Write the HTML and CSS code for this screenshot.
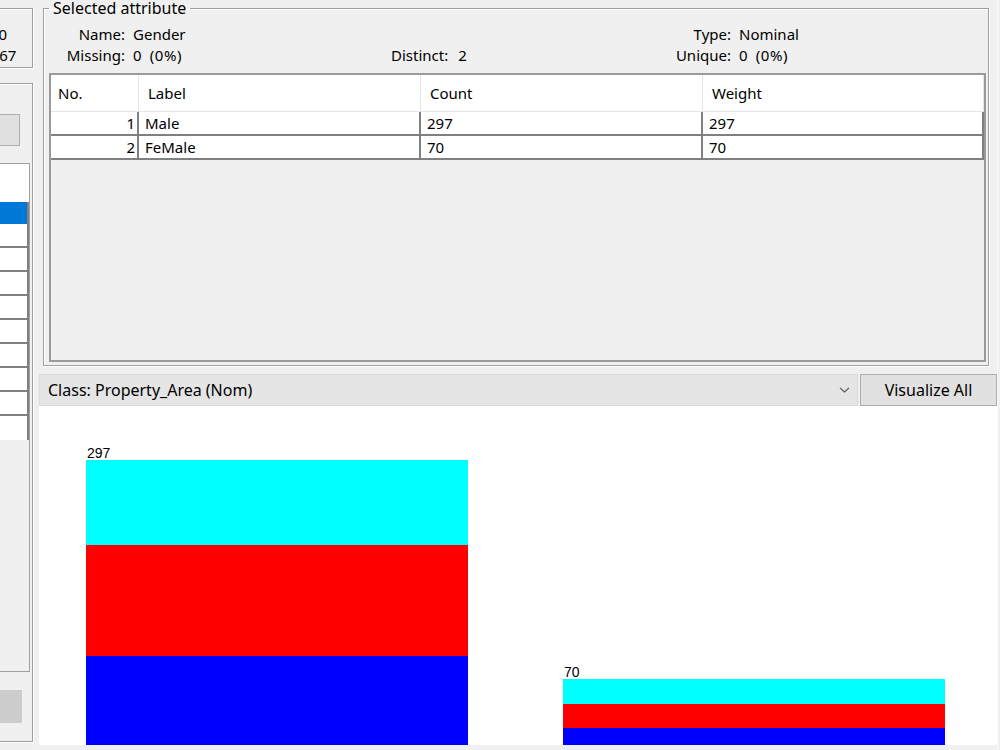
FILE: index.html
```html
<!DOCTYPE html>
<html>
<head>
<meta charset="utf-8">
<link rel="stylesheet" href="styles.css">
</head>
<body>
<div class="app">
  <div class="left">
    <div class="box etched rel">
      <div class="rel-line a">Attributes: 10</div>
      <div class="rel-line b">Sum of weights: 367</div>
    </div>
    <div class="box etched attrs">
      <button class="btn top-btn">All</button>
      <div class="attr-list">
        <div class="attr-head"></div>
        <div class="attr-row sel"></div>
        <div class="attr-row"></div>
        <div class="attr-row"></div>
        <div class="attr-row"></div>
        <div class="attr-row"></div>
        <div class="attr-row"></div>
        <div class="attr-row"></div>
        <div class="attr-row"></div>
        <div class="attr-row"></div>
        <div class="attr-row last"></div>
      </div>
      <button class="btn dis-btn">Remove</button>
    </div>
  </div>

  <div class="right">
    <fieldset class="sel-attr etched">
      <legend>Selected attribute</legend>
      <div class="info">
        <div class="lbl">Name:</div><div class="val">Gender</div><div class="mid"></div><div class="lbl">Type:</div><div class="val2">Nominal</div>
        <div class="lbl">Missing:</div><div class="val pct">0 (0%)</div><div class="mid">Distinct:<span class="dv">2</span></div><div class="lbl">Unique:</div><div class="val2 pct">0 (0%)</div>
      </div>
      <div class="tbl">
        <div class="thead">
          <div class="th first">No.</div>
          <div class="th">Label</div>
          <div class="th">Count</div>
          <div class="th">Weight</div>
        </div>
        <div class="tr">
          <div class="td num">1</div>
          <div class="td">Male</div>
          <div class="td">297</div>
          <div class="td">297</div>
        </div>
        <div class="tr">
          <div class="td num">2</div>
          <div class="td">FeMale</div>
          <div class="td">70</div>
          <div class="td">70</div>
        </div>
      </div>
    </fieldset>

    <div class="class-row">
      <div class="combo">
        <span>Class: Property_Area (Nom)</span>
        <svg class="chev" width="11" height="6" viewBox="0 0 11 6"><path d="M1 0.8 L5.5 5 L10 0.8" fill="none" stroke="#555" stroke-width="1.1"/></svg>
      </div>
      <button class="viz">Visualize All</button>
    </div>

    <div class="chart">
      <div class="bar">
        <div class="bar-label">297</div>
        <div class="seg cyan" style="height:85px"></div>
        <div class="seg red" style="height:111px"></div>
        <div class="seg blue" style="height:89px"></div>
      </div>
      <div class="bar">
        <div class="bar-label">70</div>
        <div class="seg cyan" style="height:25px"></div>
        <div class="seg red" style="height:24px"></div>
        <div class="seg blue" style="height:17px"></div>
      </div>
    </div>
  </div>
  <div class="edge"></div>
</div>
</body>
</html>
```

FILE: styles.css
```css
* { box-sizing: border-box; }
html, body { margin: 0; padding: 0; }
body {
  width: 1000px;
  height: 750px;
  overflow: hidden;
  background: #f0f0f0;
  font-family: "Noto Sans", "Open Sans", sans-serif;
  font-size: 15px;
  color: #000;
}
.app { display: flex; height: 750px; }

.etched {
  border: 1px solid #a0a0a0;
  box-shadow: inset 1px 1px 0 #fff, 1px 1px 0 #fff;
}

/* left column (mostly cut off) */
.left {
  flex: none;
  width: 160px;
  margin-left: -127px;
  display: flex;
  flex-direction: column;
  padding-top: 8px;
}
.rel { height: 60px; padding-top: 15px; line-height: 21px; }
.rel-line { text-align: right; white-space: nowrap; }
.rel-line.a { padding-right: 25px; }
.rel-line.b { padding-right: 17px; }

.attrs {
  margin-top: 15px;
  height: 659px;
  display: flex;
  flex-direction: column;
  align-items: flex-end;
}
.btn {
  font: inherit;
  width: 120px;
  border: 1px solid #adadad;
  background: #e1e1e1;
  padding: 0;
}
.top-btn { margin: 30px 12px 0 0; height: 32px; }
.dis-btn { margin: 18px 10px 0 0; height: 33px; background: #cccccc; border-color: #cccccc; color: #cccccc; }
.attr-list {
  margin: 17px 2px 0 0;
  width: 150px;
  height: 509px;
  border: 1px solid #a0a0a0;
  background: #f0f0f0;
}
.attr-head { height: 38px; background: #fff; }
.attr-row {
  height: 24px;
  background: #fff;
  border-right: 2px solid #808080;
  border-bottom: 2px solid #808080;
}
.attr-row.sel { height: 22px; background: #0078d7; border-bottom: 0; }
.attr-row.last { border-bottom: 0; }

/* right column */
.right {
  flex: none;
  width: 958px;
  margin-left: 6px;
  display: flex;
  flex-direction: column;
}
.edge {
  flex: none;
  width: 1px;
  background: #fafafa;
}
.sel-attr {
  margin: 0 8px 0 4px;
  padding: 0;
  height: 366px;
  min-width: 0;
}
.sel-attr legend {
  margin-left: 5px;
  padding: 0 4px;
  font-size: 16px;
  line-height: 16px;
}
.info {
  margin-top: 8px;
  display: grid;
  grid-template-columns: 81px 266px 283px 57px 1fr;
  line-height: 21px;
  white-space: nowrap;
}
.lbl { text-align: right; }
.val, .val2 { padding-left: 8px; }
.pct { letter-spacing: 0.6px; word-spacing: 3px; }
.dv { margin-left: 10px; }

.tbl {
  margin: 7px 2px 0 5px;
  height: 289px;
  border: 2px solid #9b9b9b;
  background: #f0f0f0;
}
.thead, .tr {
  display: grid;
  grid-template-columns: 88px 282px 282px 1fr;
}
.thead { height: 37px; background: #fff; }
.th {
  display: flex;
  align-items: center;
  padding-left: 9px;
  border-right: 1px solid #e5e5e5;
  border-bottom: 1px solid #e5e5e5;
}
.th.first { padding-left: 7px; }
.tr { height: 24px; background: #fff; }
.td {
  line-height: 22px;
  padding: 0 4px 0 6px;
  border-right: 2px solid #808080;
  border-bottom: 2px solid #808080;
  white-space: nowrap;
}
.td.num { text-align: right; padding-right: 2px; }

.class-row {
  margin-top: 8px;
  height: 32px;
  display: flex;
  gap: 2px;
}
.combo {
  flex: 1;
  display: flex;
  align-items: center;
  justify-content: space-between;
  padding: 0 7px 0 8px;
  background: #e5e5e5;
  border: 1px solid #dadada;
  font-size: 16px;
}
.chev { display: block; }
.viz {
  flex: none;
  width: 137px;
  font: inherit;
  font-size: 16px;
  background: #e1e1e1;
  border: 1px solid #adadad;
  padding: 0;
}

.chart {
  flex: none;
  height: 339px;
  background: #fff;
  display: flex;
  align-items: flex-end;
  padding-left: 47px;
  gap: 95px;
}
.bar { width: 382px; display: flex; flex-direction: column; }
.bar-label {
  font-family: "Liberation Sans", Arial, sans-serif;
  font-size: 14px;
  line-height: 13px;
  height: 13px;
  padding-left: 1px;
}
.seg.cyan { background: #00ffff; }
.seg.red { background: #ff0000; }
.seg.blue { background: #0000ff; }
```
